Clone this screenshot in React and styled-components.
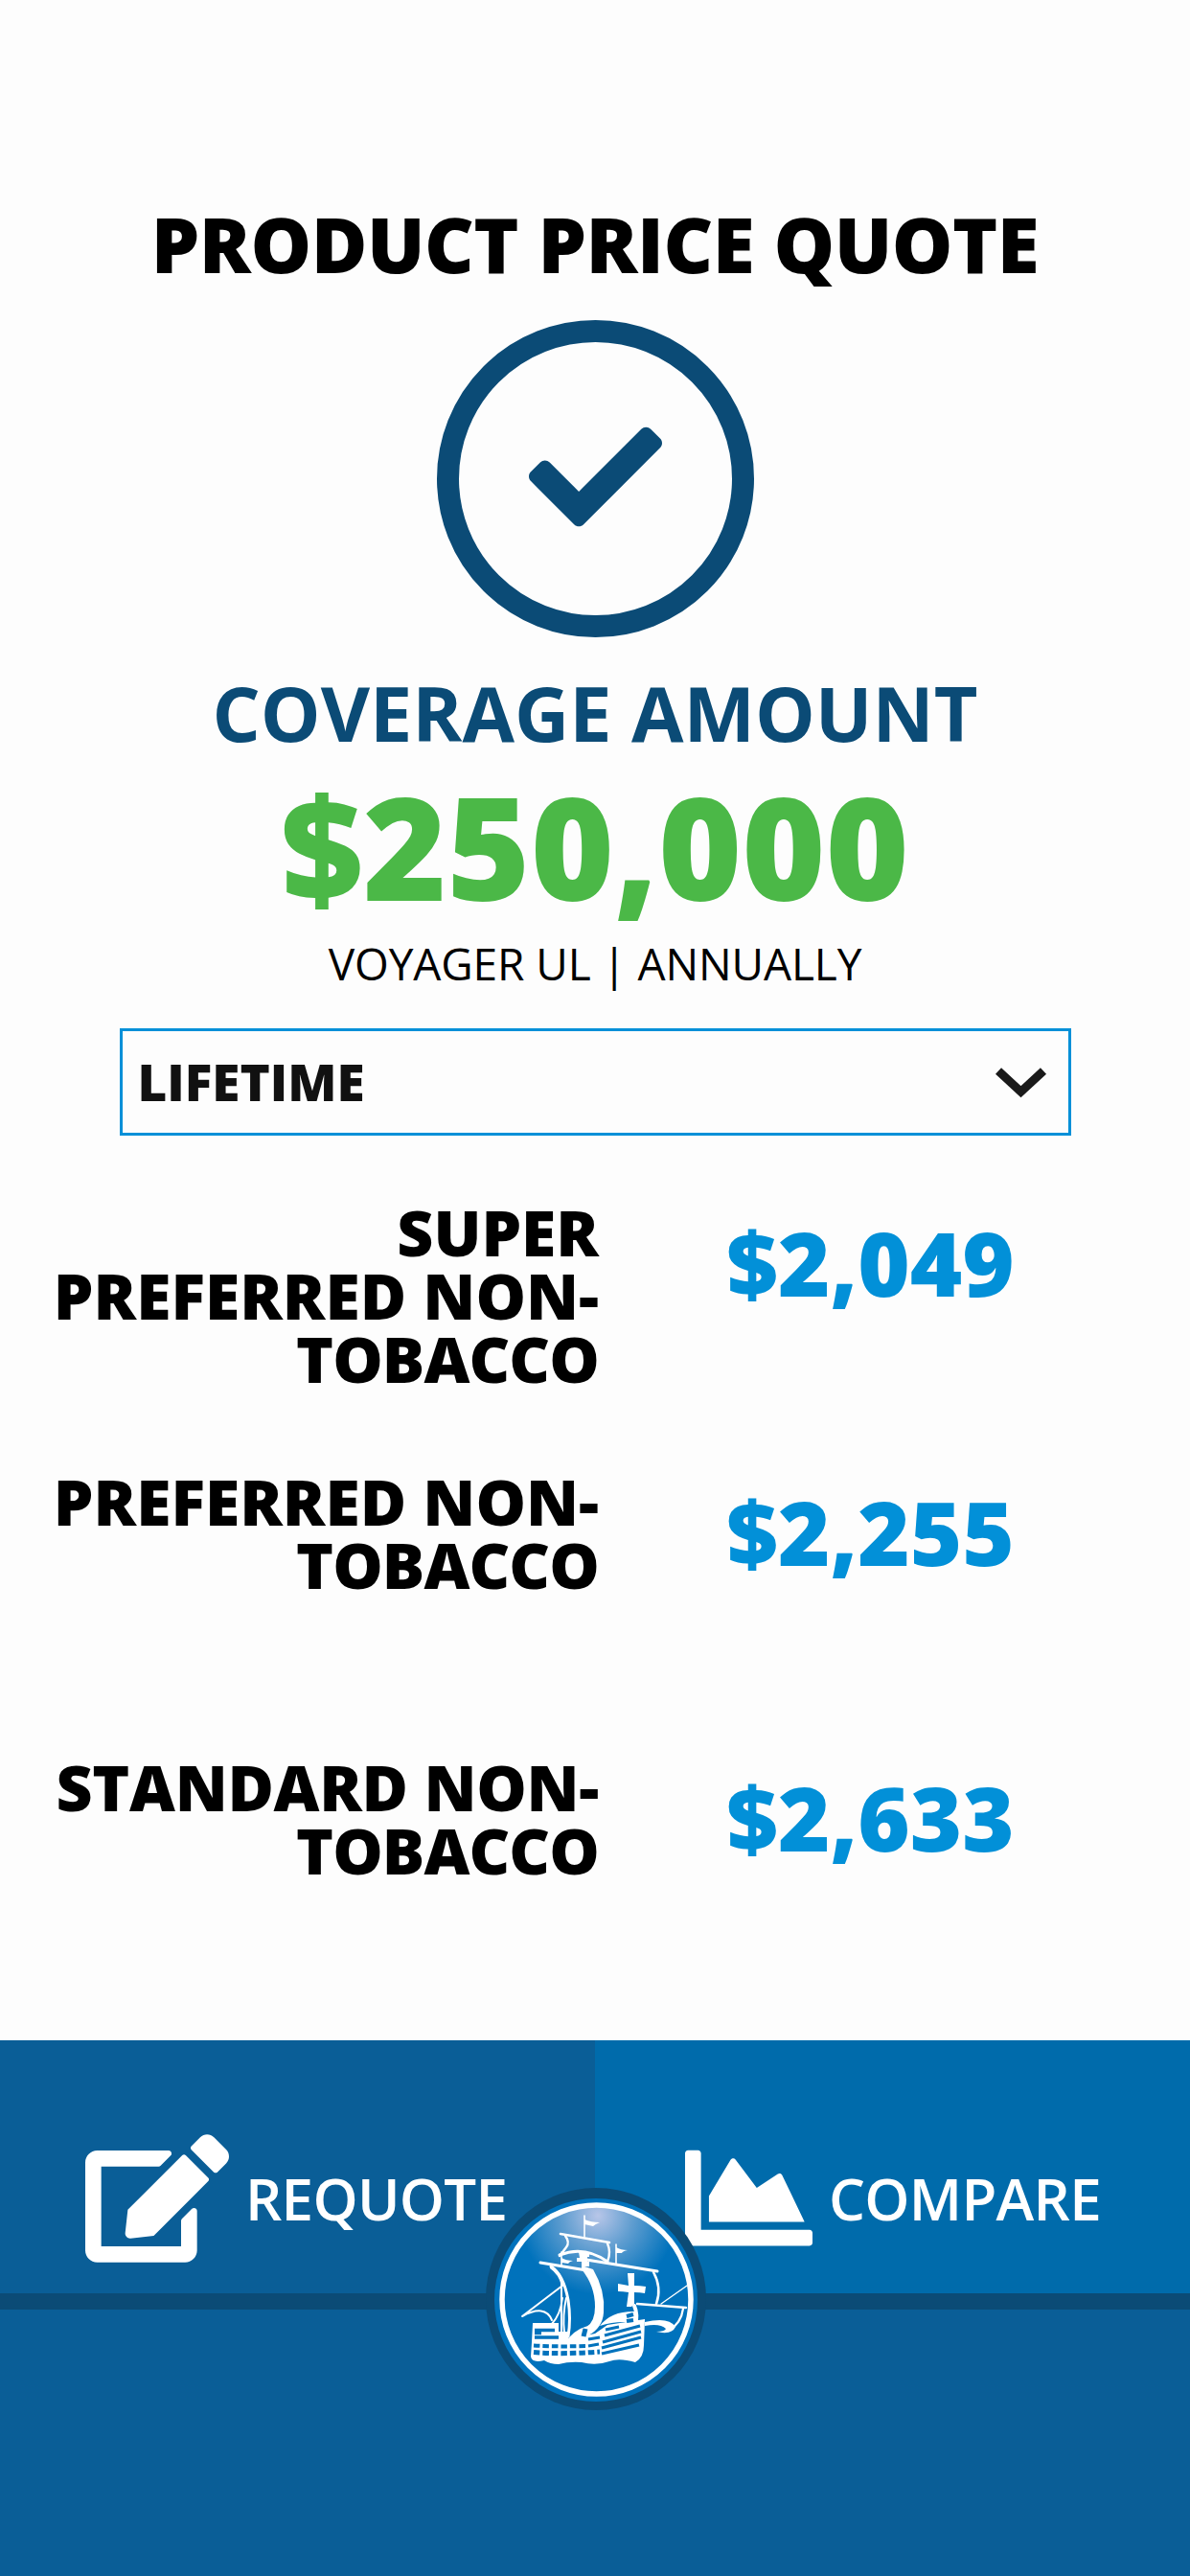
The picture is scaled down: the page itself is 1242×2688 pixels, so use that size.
import React from 'react'
import styled, { createGlobalStyle } from 'styled-components'
import { FaCheck, FaEdit, FaChartArea } from 'react-icons/fa'

const rates = [
  { name: 'Super Preferred Non-', price: '$2,049', height: 281 },
  { name: 'Preferred Non-', price: '$2,255', height: 298 },
  { name: 'Standard Non-', price: '$2,633', height: 298, tight: true },
]

function ShipLogo() {
  return (
    <Ship viewBox="0 0 250 260">
      <defs>
        <radialGradient id="glow" gradientUnits="userSpaceOnUse" cx="129" cy="42" r="82">
          <stop offset="0" stopColor="#b8c6e8" />
          <stop offset="0.45" stopColor="#5f9dd0" />
          <stop offset="1" stopColor="#0072bc" />
        </radialGradient>
      </defs>
      <circle cx="127" cy="130" r="106" fill="#0072bc" />
      <circle cx="127.500" cy="129.500" r="98.500" fill="url(#glow)" stroke="#fff" strokeWidth="5.500" />
      {/* flags, yards and rigging */}
      <g fill="none" stroke="#fff" strokeWidth="2" strokeLinecap="round" strokeLinejoin="round">
        <path d="M115 42V64M148 72v20M91 80v14" strokeWidth="1.600" />
        <path d="M90 61L141 70" strokeWidth="2.600" />
        <path d="M95 63Q100 70 96 75Q93 79 89 84M139 71Q143 80 139 90" strokeWidth="2.400" />
        <path d="M89 83Q115 73 139 90" strokeWidth="3" />
        <path d="M69 91L117 99M117 88L191 100" strokeWidth="3" />
        <path d="M80 95Q93 103 98 130Q101 150 98 168" strokeWidth="3" />
        <path d="M187 101Q196 117 190 134M170 134L221 138" strokeWidth="2.500" />
        <path d="M195 134L222 115" strokeWidth="1.400" />
        <path d="M92 115L50 147Q74 134 81 151" strokeWidth="2" />
        <path d="M91 108V166M92 128Q90 145 81 155M96 128Q92 145 94 164" strokeWidth="2" />
        <path d="M218 139Q216 154 203 162" strokeWidth="2.200" />
        <path d="M167 136Q171 145 168 157" strokeWidth="4" />
      </g>
      {/* flags, sails and cross */}
      <g fill="#fff">
        <path d="M115 46Q122 49 131 49Q126 51 124 53L115 51Z" />
        <path d="M148 75Q153 78 160 78Q155 79 154 81L148 81Z" />
        <path d="M91 86Q96 89 103 89Q99 90 98 92L91 91Z" />
        <path d="M109 80h11v5h-2v5h2v5h-8v-5h-5v-4h3z" />
        <path d="M80 93Q91 101 95 116L91 115Q88 103 79 97Z" />
        <path d="M112 94L124 98Q137 120 135 143Q134 159 119 167L117 158Q126 153 126 137Q126 115 112 98Z" />
        <path d="M160 102h7v13q6 0 12 1l-1 7q-5-1-11-1v12l-3 3h-5l2-15q-6-1-11-1v-8q6 1 11 2z" />
        <path d="M98 170Q110 156 125 157Q119 162 121 171Q108 172 98 180Z" />
        <path d="M131 157Q143 141 169 142V154Q149 151 131 157Z" />
        <path d="M178 153Q203 147 210 158Q207 165 196 164L190 163Q199 163 200 160Q194 154 178 157Z" />
        <path d="M61 154H88V163H98V171L126 165L139 156L178 150L177 177Q177 190 168 195Q151 190 141 194Q127 199 112 195Q99 194 88 197Q79 197 73 193Q60 196 59 189L60 174Z" />
      </g>
      {/* hull planks and gun ports */}
      <g fill="none" stroke="#0072bc">
        <path d="M63 161.500H84M63 169H88M63 164.500H70" strokeWidth="3.500" />
        <path d="M62 177.500Q88 179 116 178" strokeWidth="4" strokeDasharray="6.500 3" />
        <path d="M62 184.500Q91 187 131 184" strokeWidth="5" strokeDasharray="6.500 3" />
        <path d="M119 171L131 169M119 178L130 176M137 161L151 158M136 167L173 157M134 174L174 163M133 180L174 169M133 186L172 177" strokeWidth="3.200" />
        <path d="M159 147L166 145M159 152L166 151" strokeWidth="4" />
        <path d="M116 160L114 168" strokeWidth="5" />
      </g>
    </Ship>
  )
}

export default function App() {
  return (
    <Page>
      <GlobalStyle />
      <Quote>
        <Title>Product Price Quote</Title>
        <CheckCircle>
          <FaCheck size={139} />
        </CheckCircle>
        <Subtitle>Coverage Amount</Subtitle>
        <Amount>$250,000</Amount>
        <Plan>Voyager UL | Annually</Plan>
        <Select>
          Lifetime
          <Chevron viewBox="0 0 54 36">
            <path d="M3 6.500L26.500 28.200L50 6.500" />
          </Chevron>
        </Select>
      </Quote>
      <Rates>
        {rates.map((rate) => (
          <Rate key={rate.name} $height={rate.height}>
            <RateName $tight={rate.tight}>
              {rate.name}
              <Tobacco>Tobacco</Tobacco>
            </RateName>
            <Price>{rate.price}</Price>
          </Rate>
        ))}
      </Rates>
      <Footer>
        <Actions>
          <Action $bg="#0a5e97" $left={89}>
            <FaEdit size={150} />
            Requote
          </Action>
          <Action $bg="#006bab" $left={94}>
            <FaChartArea size={133} />
            Compare
          </Action>
        </Actions>
        <Badge>
          <ShipLogo />
        </Badge>
      </Footer>
    </Page>
  )
}

const GlobalStyle = createGlobalStyle`
  * {
    box-sizing: border-box;
    margin: 0;
  }
  body {
    background: #fdfdfd;
    font-family: 'Open Sans', sans-serif;
  }
`
const Page = styled.main`
  display: flex;
  flex-direction: column;
  width: 1242px;
  height: 2688px;
  overflow: hidden;
  text-transform: uppercase;
`
const Quote = styled.section`
  display: flex;
  flex-direction: column;
  align-items: center;
  height: 1253px;
  padding-top: 214px;
  white-space: nowrap;
`
const Title = styled.h1`
  color: #000;
  font-size: 80px;
  font-weight: 800;
  line-height: 80px;
  letter-spacing: -0.5px;
`
const CheckCircle = styled.div`
  display: flex;
  align-items: center;
  justify-content: center;
  width: 331px;
  height: 331px;
  margin-top: 40px;
  border: 23px solid #0b4b76;
  border-radius: 50%;
  color: #0b4b76;
  svg {
    margin-bottom: 4px;
  }
`
const Subtitle = styled.h2`
  margin-top: 39px;
  color: #0b4b76;
  font-size: 79px;
  font-weight: 700;
  line-height: 80px;
`
const Amount = styled.p`
  color: #4bb847;
  font-size: 149px;
  font-weight: 800;
  line-height: 149px;
  margin-top: 24px;
`
const Plan = styled.p`
  color: #000;
  font-size: 46px;
  line-height: 46px;
  letter-spacing: -0.1px;
  margin-top: 25px;
`
const Select = styled.div`
  display: flex;
  align-items: center;
  justify-content: space-between;
  width: 993px;
  height: 112px;
  margin-top: 45px;
  padding: 0 22px 2px 16px;
  border: 3px solid #0290d8;
  color: #111;
  font-size: 53px;
  font-weight: 800;
`
const Chevron = styled.svg`
  width: 54px;
  height: 36px;
  margin-top: 2px;
  fill: none;
  stroke: #1a1a1a;
  stroke-width: 9;
`
const Rates = styled.section`
  flex: 1;
`
const Rate = styled.div`
  display: flex;
  height: ${(props) => props.$height}px;
`
const RateName = styled.h3`
  width: 625px;
  padding-left: 40px;
  color: #000;
  font-size: 66px;
  font-weight: 800;
  line-height: 66px;
  text-align: right;
  letter-spacing: ${(props) => (props.$tight ? '-0.3px' : '0')};
`
const Tobacco = styled.span`
  display: block;
  letter-spacing: -0.9px;
`
const Price = styled.p`
  flex: 1;
  padding: 19px 53px 0 0;
  color: #0290d8;
  font-size: 93px;
  font-weight: 800;
  line-height: 93px;
  text-align: center;
  margin-left: 3px;
`
const Footer = styled.footer`
  position: relative;
  height: 559px;
  background: #0a5e97;
`
const Actions = styled.nav`
  display: flex;
  height: 281px;
  border-bottom: 17px solid #0b4b76;
`
const Action = styled.div`
  display: flex;
  align-items: center;
  gap: 17px;
  width: 621px;
  padding: 65px 0 0 ${(props) => props.$left}px;
  background: ${(props) => props.$bg};
  color: #fff;
  font-size: 60px;
  font-weight: 600;
  letter-spacing: -0.7px;
`
const Badge = styled.div`
  position: absolute;
  top: 141px;
  left: 495px;
  width: 250px;
  height: 260px;
  &::before {
    content: '';
    position: absolute;
    left: 12px;
    top: 13px;
    width: 230px;
    height: 232px;
    border-radius: 50%;
    background: #0b4b76;
  }
`
const Ship = styled.svg`
  position: relative;
  width: 250px;
  height: 260px;
`
